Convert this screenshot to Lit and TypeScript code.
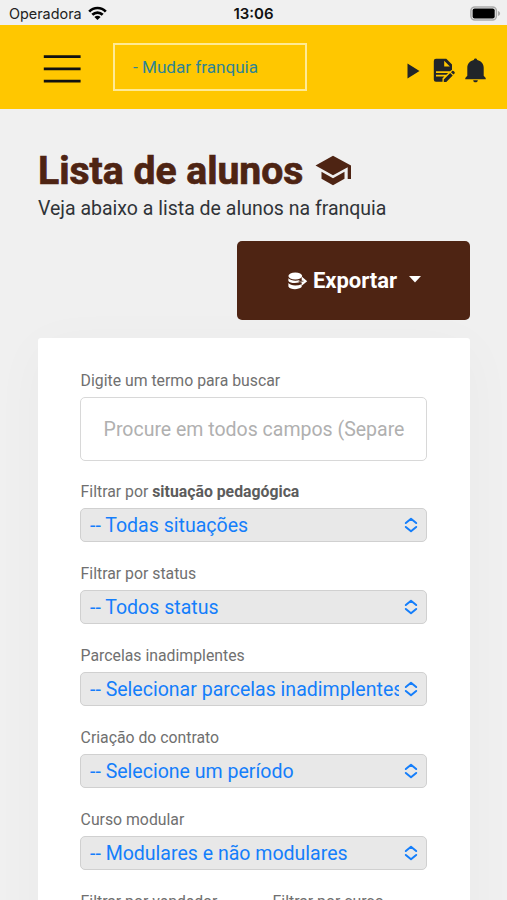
import { LitElement, html, css } from "lit";
import { customElement, property } from "lit/decorators.js";

@customElement("select-field")
class SelectField extends LitElement {
  @property() label = "";
  @property() strong = "";
  @property() value = "";

  static styles = css`
    :host { display: block; margin-bottom: 22px; }
    .label { height: 20px; line-height: 20px; font-size: 15.8px; color: #707070; margin-bottom: 6px; padding-left: 0.6px; white-space: nowrap; }
    .label b { font-weight: 700; color: #5c5c5c; }
    .select {
      box-sizing: border-box; height: 34px; border: 1px solid #d0d0d0; border-radius: 5px;
      background: #e8e8e8; padding: 0 7px 0 9px; display: flex; align-items: center;
      justify-content: space-between; color: #147efb; font-size: 19.55px;
    }
    .value { white-space: nowrap; overflow: hidden; width: 309px; line-height: 30px; padding-top: 2px; }
    .arrows { width: 16px; height: 18px; flex: none; }
  `;

  render() {
    return html`
      <div class="label">${this.label}${this.strong ? html` <b>${this.strong}</b>` : ""}</div>
      <div class="select">
        <span class="value">${this.value}</span>
        <svg class="arrows" viewBox="0 0 16 18" fill="none" stroke="#147efb" stroke-width="2" stroke-linecap="round" stroke-linejoin="round">
          <path d="M2.8 7 8 2.800l5.200 4.200M2.800 11 8 15.200l5.200-4.200" />
        </svg>
      </div>
    `;
  }
}

@customElement("app-root")
class AppRoot extends LitElement {
  static styles = css`
    :host {
      display: block; box-sizing: border-box; width: 507px; height: 900px; overflow: hidden;
      background: #f0f0f0; font-family: Roboto, sans-serif; color: #212529;
    }
    svg { display: block; flex: none; }
    .status {
      height: 25px; display: grid; grid-template-columns: 1fr auto 1fr; align-items: center;
      padding: 2px 6px 0 9px; box-sizing: border-box; font-family: Inter, sans-serif; font-size: 14.4px; color: #222;
    }
    .carrier { display: flex; align-items: center; gap: 6px; }
    .time { font-weight: 600; color: #111; font-size: 15px; margin-right: 3px; }
    .battery { justify-self: end; }
    .bar { height: 84px; background: #ffc700; display: flex; align-items: center; padding: 0 21px 0 43px; box-sizing: border-box; }
    .menu { width: 38px; height: 30px; margin-right: 32px; margin-top: 3px; }
    .franchise {
      box-sizing: border-box; width: 194px; height: 48px; border: 2px solid #ffea95; padding-left: 18px;
      line-height: 45px; font-size: 17.1px; color: #2e8496; white-space: nowrap;
    }
    .tools { margin-left: auto; display: flex; align-items: center; margin-top: 7px; }
    .doc { margin-left: 13px; }
    .bell { margin-left: 10px; }
    .main { padding: 39px 37px 0 38px; }
    .title {
      display: flex; align-items: center; height: 47px; margin: 0; font-size: 39.1px; line-height: 47px;
      font-weight: 700; color: #4e2413; -webkit-text-stroke: 0.7px #4e2413; white-space: nowrap;
    }
    .cap { margin-left: 12px; margin-top: -3px; }
    .sub { margin: 0; font-size: 19.5px; line-height: 28px; white-space: nowrap; color: #303438; }
    .actions { display: flex; justify-content: flex-end; margin: 18px 0 18px; }
    .export {
      box-sizing: border-box; width: 233px; height: 79px; border-radius: 5px; background: #4e2413; color: #fff;
      display: flex; align-items: center; justify-content: center; padding-left: 2px; font-size: 22px; font-weight: 700;
    }
    .db { margin-right: 5px; }
    .caret { margin-left: 12px; margin-top: -3px; }
    .card { box-sizing: border-box; background: #fff; border-radius: 3px 3px 0 0; height: 620px; padding: 33px 43px 0 42px; box-shadow: 0 10px 55px rgba(0, 0, 0, 0.03); }
    .label { height: 20px; line-height: 20px; font-size: 15.8px; color: #707070; margin-bottom: 6px; padding-left: 0.6px; white-space: nowrap; }
    .search {
      box-sizing: border-box; height: 64px; border: 1.5px solid #d8d8d8; border-radius: 5px; padding: 0 22.6px;
      font-size: 19.5px; line-height: 64px; color: #b0b0b0; white-space: nowrap; overflow: hidden; margin-bottom: 21px;
    }
    .pair { display: grid; grid-template-columns: 192px 1fr; }
  `;

  render() {
    return html`
      <div class="status">
        <div class="carrier">
          <span>Operadora</span>
          <svg width="19" height="15" viewBox="0 0 19 15" fill="none" stroke="#000" stroke-width="2.7">
            <path d="M1.200 5.600C5.800 .8 13.200 .8 17.800 5.600M4.300 8.800c3-3 7.400-3 10.400 0" />
            <path d="M6.400 10.900c1.800-1.600 4.400-1.600 6.200 0L9.500 14z" fill="#000" stroke="none" />
          </svg>
        </div>
        <div class="time">13:06</div>
        <svg class="battery" width="31" height="15" viewBox="0 0 31 15">
          <rect x=".9" y=".9" width="25.5" height="13.2" rx="4" fill="#eee" stroke="#aaa" stroke-width="1.5" />
          <rect x="2.6" y="2.6" width="22.1" height="9.8" rx="2" fill="#000" />
          <path d="M28 5v5c2.800-1 2.800-4 0-5z" fill="#aaa" />
        </svg>
      </div>
      <div class="bar">
        <svg class="menu" viewBox="0 0 38 30" stroke="#111" stroke-width="2.7">
          <path d="M.8 2.700h36.800M.8 14.900h36.800M.8 27.100h36.800" />
        </svg>
        <div class="franchise">- Mudar franquia</div>
        <div class="tools">
          <svg width="13" height="16" viewBox="0 0 13 16"><path d="M.5 .5v15L12.500 8z" fill="#212529" /></svg>
          <svg class="doc" width="22" height="25" viewBox="0 0 22 25" fill="#212529">
            <path fill-rule="evenodd" d="M3 .8h10.300l5.700 5.700v5.300l-2 1.400H3v1.700h12.200l-1.900 1.800H3v1.700h8.400l-1.900 1.800v3.500H3a2.200 2.200 0 0 1-2.200-2.200V3A2.200 2.200 0 0 1 3 .8zM11.200 2.700v5.700h5.700z" />
            <path d="m10.800 21.400 6.400-6.400 2.500 2.500-6.400 6.400h-2.500zM18 14.200l1.300-1.300c.9-.8 3.200 1.500 2.400 2.400l-1.300 1.300z" />
          </svg>
          <svg class="bell" width="21" height="25" viewBox="0 0 21 25" fill="#212529">
            <path d="M10.500 .5c1 0 1.600.7 1.700 1.600 3.900.8 6.500 3.900 6.500 7.600v8l2 2.300v1.300H.300v-1.300l2-2.300v-8c0-3.700 2.600-6.800 6.500-7.600.1-.9.7-1.600 1.700-1.600zM8.200 22.200h4.600c0 1.300-1 2.100-2.300 2.100s-2.300-.8-2.300-2.100z" />
          </svg>
        </div>
      </div>
      <div class="main">
        <h1 class="title">
          Lista de alunos
          <svg class="cap" width="37" height="31" viewBox="0 0 37 31" fill="#4e2413">
            <path d="M18 .8 36 10.500v13.500h-3.300V12.300L18 20.300.5 10.500z" />
            <path d="M6.500 16.700 18 23.200l11.500-6.500v7L18 30.200 6.500 23.700z" />
          </svg>
        </h1>
        <p class="sub">Veja abaixo a lista de alunos na franquia</p>
        <div class="actions">
          <div class="export">
            <svg class="db" width="20" height="18" viewBox="0 0 20 18">
              <ellipse cx="7.300" cy="4" rx="6.900" ry="3.500" fill="#fff" />
              <path d="M.4 6.200c2 2.600 8 3 11 1.800v2.300c-4.500 1.600-9.500.7-11-1.400zM.4 11c2 2.700 8 3.200 13.300 1.200v2.900c-3.500 3-11.800 2.700-13.300-.7z" fill="#fff" />
              <path d="M8.500 9.200h5.200V4.600L19.200 9.200 13.700 13.800V10.600" fill="#fff" />
              <path d="M10.500 9.200h5" stroke="#4e2413" stroke-width=".8" />
            </svg>
            <span>Exportar</span>
            <svg class="caret" width="12" height="7" viewBox="0 0 12 7"><path d="M0 0h12L6 6.500z" fill="#fff" /></svg>
          </div>
        </div>
        <div class="card">
          <div class="label">Digite um termo para buscar</div>
          <div class="search">Procure em todos campos (Separe</div>
          <select-field label="Filtrar por" strong="situação pedagógica" value="-- Todas situações"></select-field>
          <select-field label="Filtrar por status" value="-- Todos status"></select-field>
          <select-field label="Parcelas inadimplentes" value="-- Selecionar parcelas inadimplentes"></select-field>
          <select-field label="Criação do contrato" value="-- Selecione um período"></select-field>
          <select-field label="Curso modular" value="-- Modulares e não modulares"></select-field>
          <div class="pair">
            <div class="label">Filtrar por vendedor</div>
            <div class="label">Filtrar por curso</div>
          </div>
        </div>
      </div>
    `;
  }
}
